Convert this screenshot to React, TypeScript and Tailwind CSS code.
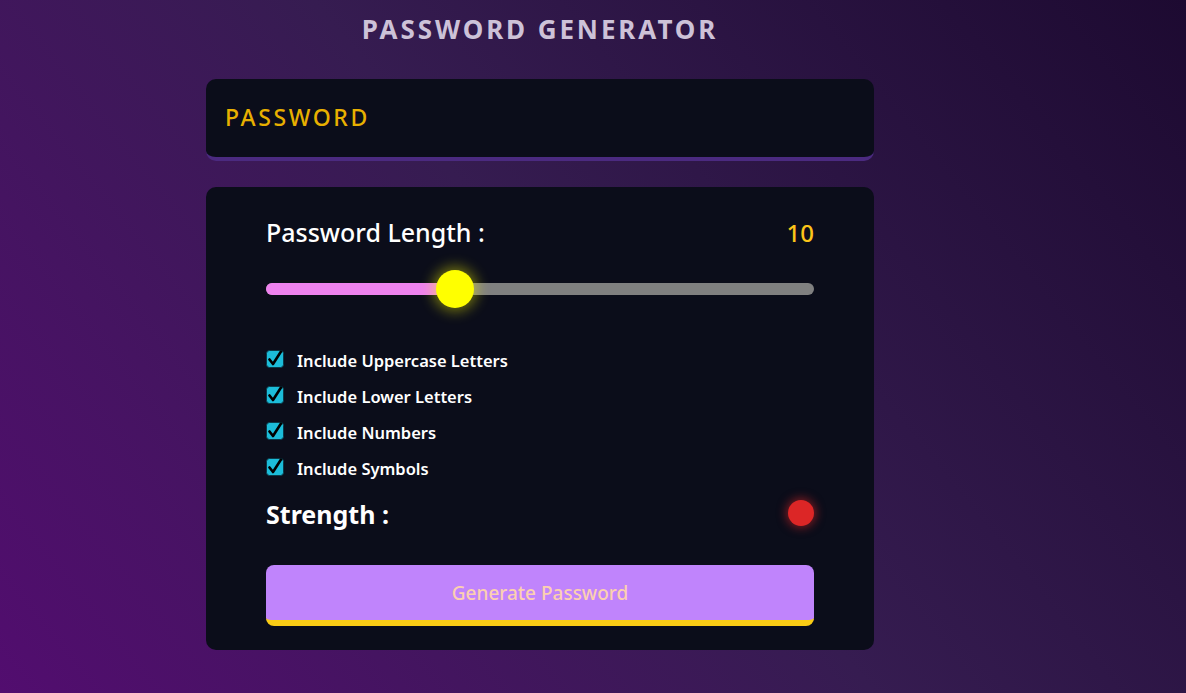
import React from "react";

const Check = () => (
  <svg width="18" height="18" viewBox="0 0 18 18" className="shrink-0">
    <rect x="0.5" y="0.5" width="17" height="17" rx="3" fill="#1cbcd9" stroke="#0a3a48" strokeWidth="1" />
    <path d="M3.5 9.5 L7 14 L15 1.5" fill="none" stroke="#000" strokeWidth="2.6" strokeLinecap="round" strokeLinejoin="round" />
  </svg>
);

const options = [
  "Include Uppercase Letters",
  "Include Lower Letters",
  "Include Numbers",
  "Include Symbols",
];

export default function App() {
  return (
    <div
      className="min-h-screen w-full bg-[linear-gradient(231deg,#1d0a31_0%,#361c51_50%,#520d6f_100%)] text-white"
      style={{ fontFamily: '"Noto Sans", "Open Sans", sans-serif', height: 693 }}
    >
      <div className="w-[1080px] flex flex-col items-center">
        <h1 className="mt-[13px] h-[32px] leading-[32px] text-[26px] font-bold uppercase tracking-[2.9px] text-[#cdc2d8]">
          Password Generator
        </h1>

        <div className="mt-[34px] w-[668px] h-[82px] rounded-[10px] bg-[#0b0d1a] border-b-4 border-[#4b2a80] flex items-center px-[19px]">
          <span className="text-[23px] font-medium tracking-[2.6px] text-[#e8b000] mt-[-2px]">PASSWORD</span>
        </div>

        <div className="mt-[26px] w-[668px] rounded-[10px] bg-[#0b0d1a] px-[60px] pt-[28px] pb-[24px] flex flex-col">
          <div className="flex items-center justify-between h-[36px]">
            <span className="text-[25px] font-medium text-white">Password Length :</span>
            <span className="text-[24px] font-medium text-[#fcc419]">10</span>
          </div>

          <div className="relative mt-[19px] h-[38px] flex items-center">
            <div className="w-full h-[12px] rounded-full bg-[#808080] overflow-hidden">
              <div className="h-full w-[189px] bg-[#ee82ee]" />
            </div>
            <div className="absolute left-[170px] top-0 w-[38px] h-[38px] rounded-full bg-[#ffff00] shadow-[0_0_14px_3px_rgba(255,255,0,0.45)]" />
          </div>

          <div className="mt-[35px] flex flex-col">
            {options.map((o) => (
              <label key={o} className="h-[36px] flex items-center gap-[13px]">
                <span className="mt-[-4px]"><Check /></span>
                <span className="text-[16.5px] font-semibold text-white">{o}</span>
              </label>
            ))}
          </div>

          <div className="mt-[9px] h-[40px] flex items-center justify-between">
            <span className="text-[25px] font-bold text-white mt-[-2px]">Strength :</span>
            <span className="w-[26px] h-[26px] rounded-full bg-[#dc2626] shadow-[0_0_10px_2px_rgba(220,38,38,0.55)] mt-[-6px]" />
          </div>

          <button className="mt-[29px] h-[61px] w-full rounded-[8px] bg-[#c084fc] border-b-[6px] border-[#facc15] text-[19px] font-medium text-[#fcd0b0] pt-[1px]">
            Generate Password
          </button>
        </div>
      </div>
    </div>
  );
}
